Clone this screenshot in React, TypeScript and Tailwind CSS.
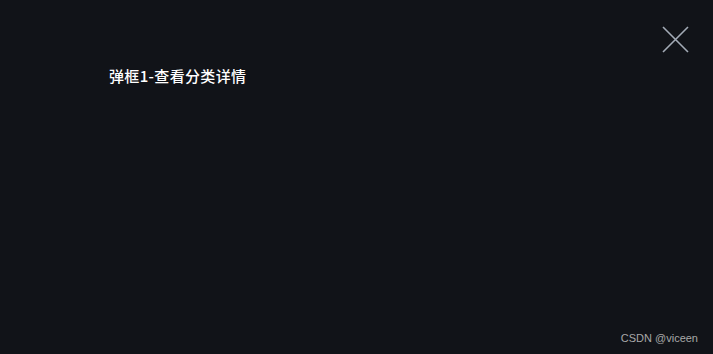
import React from "react";

export default function App() {
  return (
    <div className="relative w-[713px] h-[354px] bg-[#111318] overflow-hidden" style={{ fontFamily: '"Noto Sans CJK SC", "Liberation Sans", sans-serif' }}>
      <div className="pl-[109px] pt-[66px]">
        <h1 className="text-[15px] leading-[20px] font-medium tracking-[0.35px] text-white m-0">弹框1-查看分类详情</h1>
      </div>
      <button className="absolute left-[662px] top-[26px] w-[27px] h-[27px] p-0 bg-transparent border-0">
        <svg width="27" height="27" viewBox="0 0 27 27">
          <path d="M1 1 L26 26 M26 1 L1 26" stroke="#a3abb6" strokeWidth="1.6" fill="none" />
        </svg>
      </button>
      <div className="absolute right-[15px] bottom-[9px] text-[11px] leading-[14px] text-[#a8a8a8]" style={{ fontFamily: '"Liberation Sans", Arial, sans-serif' }}>
        CSDN @viceen
      </div>
    </div>
  );
}
